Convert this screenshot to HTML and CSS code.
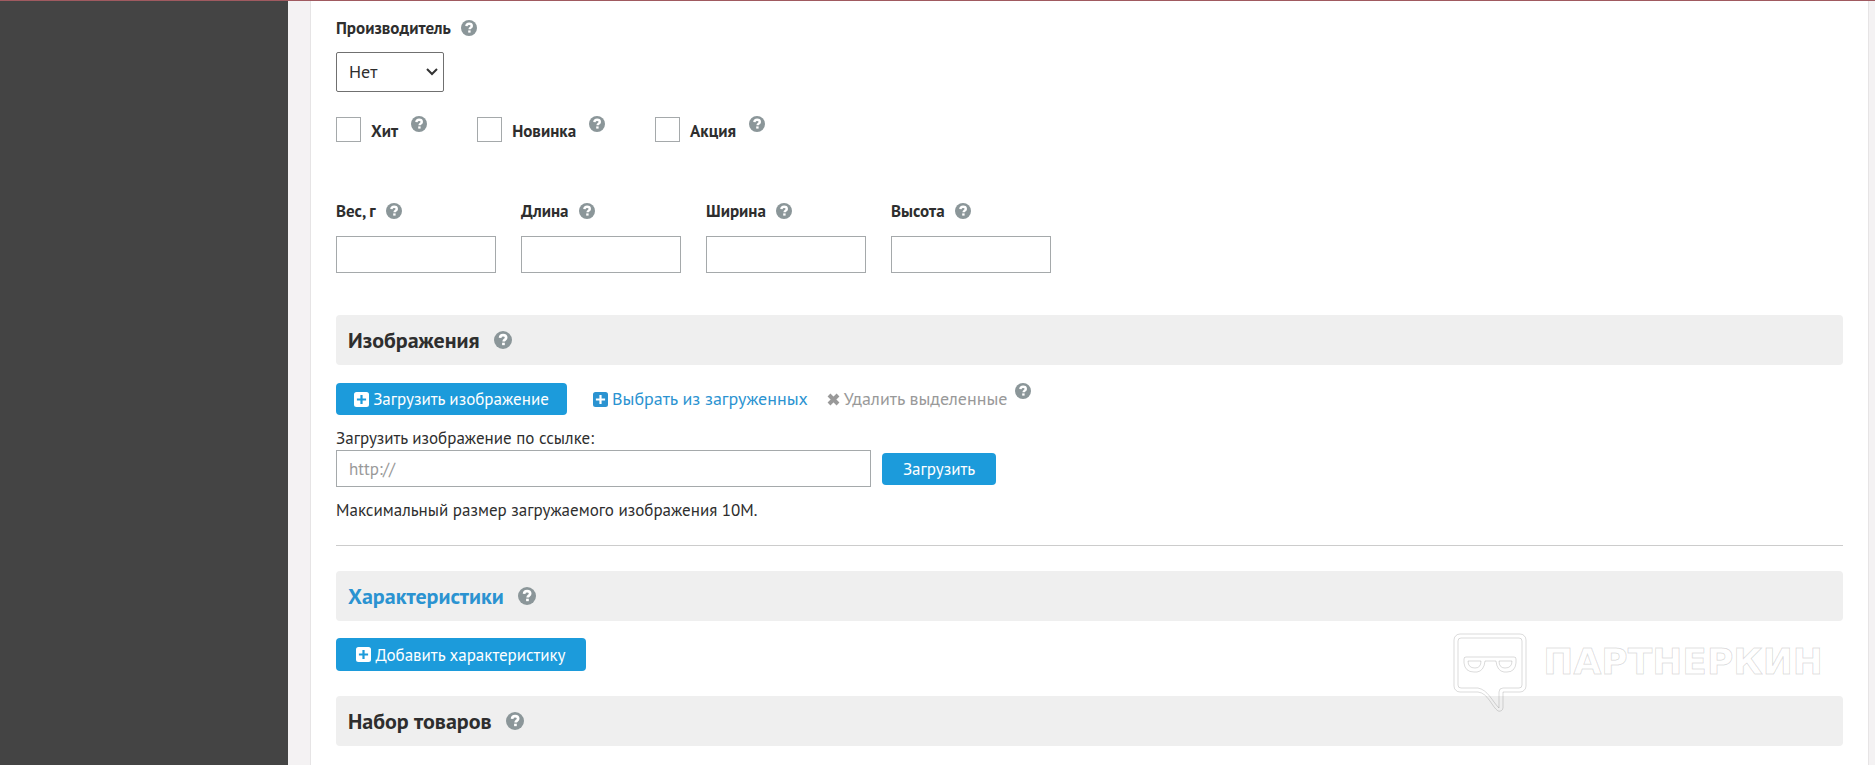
FILE: index.html
```
<!DOCTYPE html>
<html lang="ru">
<head>
  <meta charset="UTF-8">
  <meta name="viewport" content="width=device-width, initial-scale=1">
  <title>Редактирование товара</title>
  <link rel="stylesheet" href="styles.css">
</head>
<body>

  <svg class="sprite" aria-hidden="true">
    <symbol id="help" viewBox="0 0 16 16">
      <circle cx="8" cy="8" r="8" fill="#8b9699"/>
      <path d="M5.400 6.100C5.500 4.500 6.600 3.700 8.100 3.700c1.600 0 2.700.9 2.700 2.200 0 1.700-2.200 1.800-2.200 3.400" fill="none" stroke="#fff" stroke-width="2.400"/>
      <rect x="7.200" y="10.400" width="2.400" height="2.200" fill="#fff"/>
    </symbol>
    <symbol id="plus" viewBox="0 0 15 15">
      <path fill="currentColor" fill-rule="evenodd" d="M2.500 0h10A2.500 2.500 0 0 1 15 2.500v10a2.500 2.500 0 0 1-2.500 2.500h-10A2.500 2.500 0 0 1 0 12.500v-10A2.500 2.500 0 0 1 2.500 0zM6.400 2.900v3.500H2.900v2.200h3.500v3.500h2.200V8.600h3.500V6.400H8.600V2.900z"/>
    </symbol>
    <symbol id="cross" viewBox="0 0 13 13">
      <path d="M2 2l9 9M11 2l-9 9" stroke="currentColor" stroke-width="4"/>
    </symbol>
  </svg>

  <div class="layout">
    <aside class="sidebar"></aside>

    <main class="content">
      <form class="product-form">
        <div class="label-row">
          <label class="label" for="vendor">Производитель</label>
          <svg class="help"><use href="#help"/></svg>
        </div>
        <select class="select" id="vendor">
          <option>Нет</option>
        </select>

        <div class="checks">
          <div class="check">
            <input type="checkbox" id="hit">
            <label class="label" for="hit">Хит</label>
            <svg class="help"><use href="#help"/></svg>
          </div>
          <div class="check">
            <input type="checkbox" id="new">
            <label class="label" for="new">Новинка</label>
            <svg class="help"><use href="#help"/></svg>
          </div>
          <div class="check">
            <input type="checkbox" id="sale">
            <label class="label" for="sale">Акция</label>
            <svg class="help"><use href="#help"/></svg>
          </div>
        </div>

        <div class="sizes">
          <div class="size">
            <div class="label-row">
              <label class="label" for="weight">Вес, г</label>
              <svg class="help"><use href="#help"/></svg>
            </div>
            <input class="input" type="text" id="weight">
          </div>
          <div class="size">
            <div class="label-row">
              <label class="label" for="length">Длина</label>
              <svg class="help"><use href="#help"/></svg>
            </div>
            <input class="input" type="text" id="length">
          </div>
          <div class="size">
            <div class="label-row">
              <label class="label" for="width">Ширина</label>
              <svg class="help"><use href="#help"/></svg>
            </div>
            <input class="input" type="text" id="width">
          </div>
          <div class="size">
            <div class="label-row">
              <label class="label" for="height">Высота</label>
              <svg class="help"><use href="#help"/></svg>
            </div>
            <input class="input" type="text" id="height">
          </div>
        </div>

        <h2 class="section-title">Изображения <svg class="help help-big"><use href="#help"/></svg></h2>

        <div class="actions">
          <button class="btn btn-upload" type="button"><svg class="icon"><use href="#plus"/></svg>Загрузить изображение</button>
          <a class="link" href="#"><svg class="icon"><use href="#plus"/></svg>Выбрать из загруженных</a>
          <a class="link link-muted" href="#"><svg class="icon icon-cross"><use href="#cross"/></svg>Удалить выделенные</a>
          <svg class="help"><use href="#help"/></svg>
        </div>

        <label for="url">Загрузить изображение по ссылке:</label>
        <div class="url-row">
          <input class="input" type="text" id="url" placeholder="http://">
          <button class="btn" type="button">Загрузить</button>
        </div>
        <p class="note">Максимальный размер загружаемого изображения 10М.</p>

        <hr class="line">

        <h2 class="section-title"><a href="#">Характеристики</a> <svg class="help help-big"><use href="#help"/></svg></h2>
        <button class="btn btn-add" type="button"><svg class="icon"><use href="#plus"/></svg>Добавить характеристику</button>

        <h2 class="section-title">Набор товаров <svg class="help help-big"><use href="#help"/></svg></h2>
      </form>
    </main>
  </div>

  <div class="watermark">
    <svg class="watermark-logo" viewBox="0 0 74 80">
      <path d="M7 1h60a6 6 0 0 1 6 6v46a6 6 0 0 1-6 6H50v16q-1 4-5 3c-6-4-10-18-20-19H7a6 6 0 0 1-6-6V7a6 6 0 0 1 6-6z"/>
      <path d="M8 5h58a3 3 0 0 1 3 3v44a3 3 0 0 1-3 3H50q-4 0-4 4v16C39 68 35 57 25 55H8a3 3 0 0 1-3-3V8a3 3 0 0 1 3-3z"/>
      <path d="M13 24h48q2 0 2 2v4q-1 9-9 9h-3q-7-1-8-11H32q-1 10-8 11h-3q-9 0-10-9v-4q0-2 2-2z"/>
      <path d="M15 28h13q0 7-6 7-7 0-7-7zM46 28h13q0 7-7 7-6 0-6-7z"/>
    </svg>
    <span>ПАРТНЕРКИН</span>
  </div>

</body>
</html>
```
FILE: styles.css
```
* {
  box-sizing: border-box;
}

body {
  margin: 0;
  font-family: "PT Sans", Roboto, "Noto Sans", sans-serif;
  font-size: 17px;
  line-height: 24px;
  color: #2e2e2e;
  background-color: #f4f2f3;
}

a {
  color: #2b93d1;
  text-decoration: none;
}

.sprite {
  display: none;
}

.layout {
  display: flex;
  min-height: 100vh;
  border-top: 1px solid #a05a60;
}

.sidebar {
  flex: 0 0 288px;
  background-color: #444;
}

.content {
  flex: 1;
  margin: 0 6px 0 22px;
  padding: 15px 25px 18px;
  background-color: #fff;
  border: solid #e6e4e5;
  border-width: 0 1px;
}

.product-form {
  display: flex;
  flex-direction: column;
  align-items: flex-start;
}

.label {
  font-weight: 700;
}

.help {
  flex: none;
  width: 16px;
  height: 16px;
}

.help-big {
  width: 18px;
  height: 18px;
}

.label-row {
  display: flex;
  align-items: center;
  gap: 10px;
}

.select {
  appearance: none;
  width: 108px;
  height: 40px;
  margin-top: 12px;
  padding: 0 24px 0 12px;
  font: inherit;
  font-size: 18px;
  color: inherit;
  background: #fff url("data:image/svg+xml,%3Csvg xmlns='http://www.w3.org/2000/svg' width='12' height='8'%3E%3Cpath d='M1 1l5 5 5-5' fill='none' stroke='%23333' stroke-width='2'/%3E%3C/svg%3E") no-repeat right 5px center;
  border: 1px solid #707070;
  border-radius: 2px;
}

.checks {
  display: flex;
  gap: 50px;
  margin-top: 24px;
}

.check {
  display: flex;
  align-items: flex-start;
}

.check input {
  appearance: none;
  width: 25px;
  height: 25px;
  margin: 1px 10px 0 0;
  background-color: #fff;
  border: 1px solid #a5a9ab;
}

.check input:checked {
  background-color: #1c9bdb;
}

.check .label {
  margin: 3px 13px 0 0;
}

.sizes {
  display: flex;
  flex-wrap: wrap;
  gap: 25px;
  margin-top: 56px;
}

.input {
  height: 37px;
  padding: 0 12px;
  font: inherit;
  color: inherit;
  background-color: #fff;
  border: 1px solid #a5a9ab;
  border-radius: 0;
}

.input::placeholder {
  color: #999;
}

.size .input {
  display: block;
  width: 160px;
  margin-top: 13px;
}

.section-title {
  display: flex;
  align-items: center;
  gap: 14px;
  align-self: stretch;
  height: 50px;
  margin: 0;
  padding: 0 12px;
  font-size: 22px;
  font-weight: 700;
  background-color: #efefef;
  border-radius: 4px;
}

.sizes + .section-title {
  margin-top: 42px;
}

.btn {
  display: flex;
  align-items: center;
  justify-content: center;
  gap: 4px;
  height: 32px;
  padding: 0 21px;
  font: inherit;
  color: #fff;
  background-color: #1c9bdb;
  border: 0;
  border-radius: 4px;
  cursor: pointer;
}

.btn:hover {
  background-color: #1789c2;
}

.icon {
  flex: none;
  width: 15px;
  height: 15px;
}

.icon-cross {
  width: 13px;
  height: 13px;
}

.actions {
  display: flex;
  align-items: center;
  margin: 18px 0 11px;
}

.btn-upload {
  width: 231px;
  padding: 0;
  margin-right: 26px;
}

.link {
  display: flex;
  align-items: center;
  gap: 4px;
  margin-right: 19px;
  font-size: 18px;
}

.link-muted {
  margin-right: 8px;
  color: #999;
}

.actions .help {
  margin-bottom: 16px;
}

.url-row {
  display: flex;
  align-items: center;
  gap: 11px;
}

.url-row .input {
  width: 535px;
}

.url-row .btn {
  width: 114px;
}

.note {
  margin: 11px 0 0;
}

.line {
  align-self: stretch;
  height: 1px;
  margin: 23px 0 25px;
  background-color: #ccc;
  border: 0;
}

.btn-add {
  width: 250px;
  height: 33px;
  margin: 17px 0 25px;
  padding: 0;
}

/* watermark over the page */
.watermark {
  position: absolute;
  right: 52px;
  top: 633px;
  display: flex;
  align-items: flex-start;
  gap: 16px;
  font-family: "DejaVu Sans", sans-serif;
  font-size: 36px;
  font-weight: 700;
  line-height: 58px;
  color: transparent;
  -webkit-text-stroke: 1px rgba(0, 0, 0, 0.14);
  pointer-events: none;
}

.watermark-logo {
  width: 74px;
  height: 80px;
  fill: none;
  stroke: rgba(0, 0, 0, 0.14);
}
```
